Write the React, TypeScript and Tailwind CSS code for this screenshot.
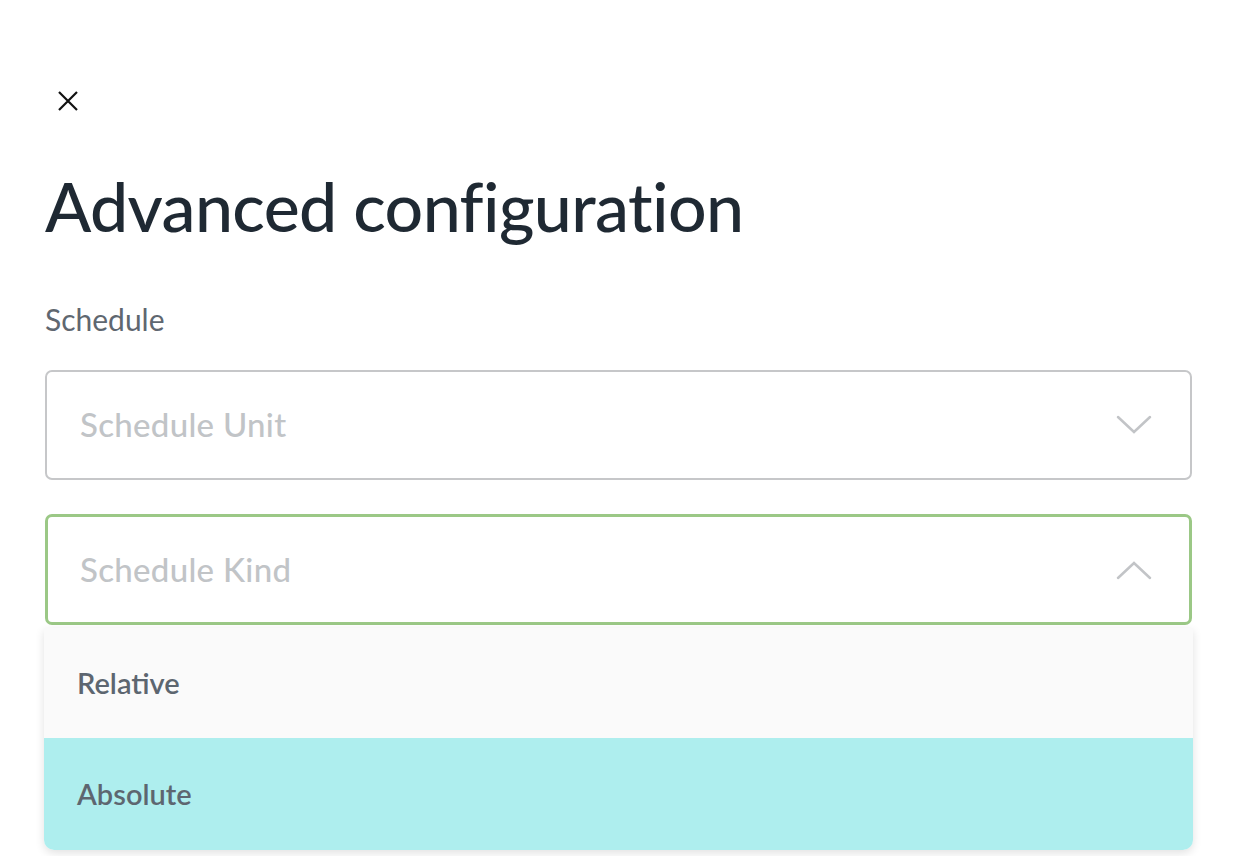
import React from 'react';

const Chevron = ({ up }: { up?: boolean }) => (
  <svg width="36" height="20" viewBox="0 0 36 20" fill="none" stroke="#c2c4c7" strokeWidth="2.5" strokeLinecap="round">
    {up ? <path d="M2 18 L18 3 L34 18" /> : <path d="M2 2 L18 17 L34 2" />}
  </svg>
);

const App = () => {
  return (
    <div className="min-h-[856px] w-[1238px] bg-white pl-[45px] pr-[46px] pt-[90px]" style={{ fontFamily: 'Lato, "Noto Sans", sans-serif' }}>
      <button className="ml-[12px] flex h-[22px] w-[22px] items-center justify-center">
        <svg width="22" height="22" viewBox="0 0 22 22" fill="none" stroke="#111" strokeWidth="2.2">
          <path d="M2 2 L20 20 M20 2 L2 20" />
        </svg>
      </button>
      <h1 className="mt-[54px] text-[68px] font-medium leading-[80px] tracking-[-0.6px] text-[#1f2933]">Advanced configuration</h1>
      <div className="mt-[56px] text-[30px] leading-[34px] text-[#5f6770]">Schedule</div>
      <div className="mt-[34px] flex h-[110px] items-center justify-between rounded-[7px] border-2 border-[#c6c7c9] pl-[33px] pr-[38px]">
        <span className="text-[33px] font-medium tracking-[0.3px] text-[#c1c4c7]">Schedule Unit</span>
        <Chevron />
      </div>
      <div className="relative mt-[34px]">
        <div className="flex h-[111px] items-center justify-between rounded-[7px] border-[3px] border-[#9bc886] pl-[32px] pr-[37px]">
          <span className="text-[33px] font-medium tracking-[0.3px] text-[#c1c4c7]">Schedule Kind</span>
          <Chevron up />
        </div>
        <div className="absolute left-[-1px] right-[-1px] top-[114px] overflow-hidden rounded-b-[10px] shadow-[0_3px_10px_rgba(0,0,0,0.12)]">
          <div className="flex h-[110px] items-center bg-[#fafafa] pl-[33px] text-[29px] font-semibold text-[#5d6670]">Relative</div>
          <div className="flex h-[112px] items-center bg-[#aeeeee] pl-[33px] text-[29px] font-semibold text-[#5d6670]">Absolute</div>
        </div>
      </div>
    </div>
  );
};

export default App;
